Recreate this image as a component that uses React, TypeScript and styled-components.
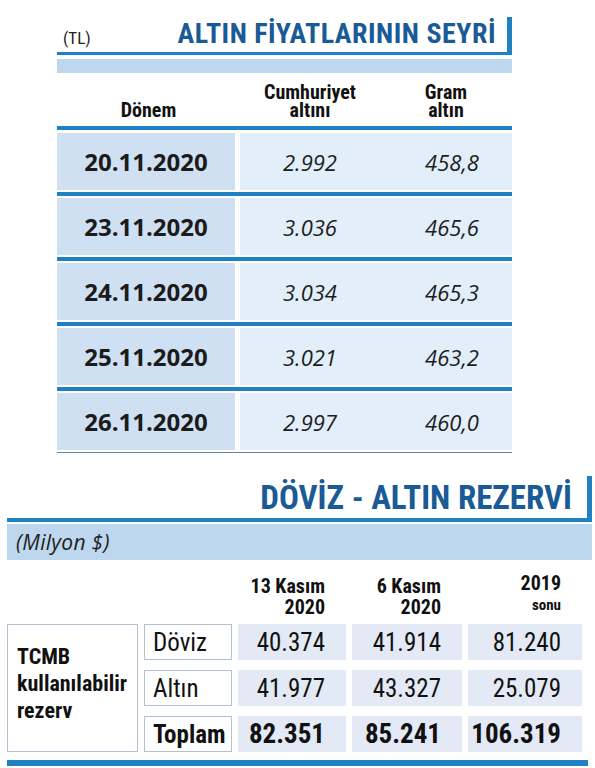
import React from "react";
import styled, { createGlobalStyle } from "styled-components";

const BLUE = "#1f80c2";
const NAVY = "#1a5a96";
const NARROW = `"Roboto Condensed", "DejaVu Sans Condensed", "Liberation Sans Narrow", "Open Sans", sans-serif`;
const SANS = `"Open Sans", "Noto Sans", sans-serif`;

const Global = createGlobalStyle`
  *, *::before, *::after { box-sizing: border-box; }
  html, body { margin: 0; padding: 0; background: #fff; }
  body { font-family: ${SANS}; color: #1c1c1c; }
`;

const Page = styled.div`
  width: 595px;
  height: 768px;
  overflow: hidden;
`;

// ---- başlık çubuğu (ortak)
const TitleBar = styled.header<{ h: number; pr: number; line: number }>`
  height: ${(p) => p.h}px;
  display: flex;
  align-items: flex-end;
  justify-content: space-between;
  padding: 0 ${(p) => p.pr}px 5px 6px;
  border-right: 5px solid ${BLUE};
  border-bottom: ${(p) => p.line}px solid ${BLUE};
`;

const Unit = styled.span`
  font-family: ${NARROW};
  font-size: 17px;
  line-height: 17px;
  color: #222;
`;

const Title = styled.h1<{ size: number; spacing: number }>`
  margin: 0 0 0 auto;
  font-family: ${NARROW};
  font-weight: 700;
  font-size: ${(p) => p.size}px;
  line-height: ${(p) => p.size - 2}px;
  letter-spacing: ${(p) => p.spacing}px;
  color: ${NAVY};
  white-space: nowrap;
`;

const Band = styled.div<{ h: number; gap: number }>`
  height: ${(p) => p.h}px;
  margin-top: ${(p) => p.gap}px;
  background: #bdd7ef;
  display: flex;
  align-items: center;
  padding-left: 9px;
  font-style: italic;
  font-size: 21px;
  letter-spacing: 0.3px;
  color: #222;
`;

// ---- altın fiyatları tablosu
const GoldSection = styled.section`
  width: 455px;
  margin-left: 57px;
  padding-top: 17px;
`;

const GoldHead = styled.div`
  height: 57px;
  display: grid;
  grid-template-columns: 183px 140px 1fr;
  align-items: end;
  padding-bottom: 7px;
  border-bottom: 4px solid ${BLUE};
  margin-bottom: 3px;
`;

const HeadCell = styled.div`
  font-family: ${NARROW};
  font-weight: 700;
  font-size: 20px;
  line-height: 18px;
  text-align: center;
  color: #111;
`;

const GoldRow = styled.div`
  display: grid;
  grid-template-columns: 178px 1fr;
  grid-template-rows: 57px;
  column-gap: 5px;
  padding-bottom: 2px;
  border-bottom: 4px solid ${BLUE};
  margin-bottom: 2px;
  &:last-child {
    border-bottom: 1px solid #5d84a8;
  }
`;

const DateCell = styled.div`
  background: #cfe0f2;
  display: flex;
  align-items: center;
  justify-content: center;
  font-weight: 700;
  font-size: 24px;
  color: #1b1b1b;
`;

const PriceCell = styled.div`
  background: #e2eef9;
  display: grid;
  grid-template-columns: 140px 1fr;
  align-items: center;
`;

const Price = styled.span<{ shift?: number }>`
  text-align: center;
  padding-left: ${(p) => p.shift ?? 0}px;
  font-style: italic;
  font-size: 22px;
  color: #1e1e1e;
`;

// ---- döviz - altın rezervi
const ReserveSection = styled.section`
  width: 585px;
  margin-left: 7px;
  margin-top: 23px;
`;

const ReserveGrid = styled.div`
  display: grid;
  grid-template-columns: 131px 88px 108px 110px 114px;
  column-gap: 6px;
`;

const ColHeads = styled(ReserveGrid)`
  height: 64px;
  align-items: end;
  padding-bottom: 6px;
`;

const ColHead = styled.div<{ lift?: number }>`
  text-align: right;
  padding-right: 21px;
  padding-bottom: ${(p) => p.lift ?? 0}px;
  font-family: ${NARROW};
  font-weight: 700;
  font-size: 20px;
  line-height: 21px;
  color: #111;
`;

const Note = styled.small`
  display: block;
  margin-top: 2px;
  font-size: 15px;
  line-height: 18px;
`;

const Body = styled(ReserveGrid)`
  grid-auto-rows: 36px;
  row-gap: 10px;
`;

const GroupBox = styled.div`
  grid-row: 1 / span 3;
  border: 1px solid #b3bfd3;
  display: flex;
  align-items: center;
  padding: 0 0 10px 9px;
  font-family: ${NARROW};
  font-weight: 700;
  font-size: 22px;
  line-height: 27px;
  color: #111;
`;

const LabelBox = styled.div<{ bold?: boolean }>`
  border: 1px solid #b3bfd3;
  display: flex;
  align-items: center;
  padding-left: 8px;
  font-family: ${NARROW};
  font-weight: ${(p) => (p.bold ? 700 : 400)};
  font-size: 25px;
  color: #111;
`;

const Amount = styled.div<{ bold?: boolean }>`
  background: #e3e9f5;
  display: flex;
  align-items: center;
  justify-content: flex-end;
  padding-right: 21px;
  font-family: ${NARROW};
  font-weight: ${(p) => (p.bold ? 700 : 400)};
  font-size: ${(p) => (p.bold ? 27 : 25)}px;
  color: #111;
`;

const BottomRule = styled.div`
  width: 581px;
  height: 6px;
  margin-top: 8px;
  background: ${BLUE};
`;

const prices = [
  { date: "20.11.2020", cumhuriyet: "2.992", gram: "458,8" },
  { date: "23.11.2020", cumhuriyet: "3.036", gram: "465,6" },
  { date: "24.11.2020", cumhuriyet: "3.034", gram: "465,3" },
  { date: "25.11.2020", cumhuriyet: "3.021", gram: "463,2" },
  { date: "26.11.2020", cumhuriyet: "2.997", gram: "460,0" },
];

const reserves = [
  { label: "Döviz", values: ["40.374", "41.914", "81.240"] },
  { label: "Altın", values: ["41.977", "43.327", "25.079"] },
  { label: "Toplam", values: ["82.351", "85.241", "106.319"], bold: true },
];

export default function App() {
  return (
    <Page>
      <Global />
      <GoldSection>
        <TitleBar h={38} pr={11} line={3}>
          <Unit>(TL)</Unit>
          <Title size={28} spacing={0.5}>
            ALTIN FİYATLARININ SEYRİ
          </Title>
        </TitleBar>
        <Band h={14} gap={4} />
        <GoldHead>
          <HeadCell>Dönem</HeadCell>
          <HeadCell>
            Cumhuriyet
            <br />
            altını
          </HeadCell>
          <HeadCell>
            Gram
            <br />
            altın
          </HeadCell>
        </GoldHead>
        {prices.map((p) => (
          <GoldRow key={p.date}>
            <DateCell>{p.date}</DateCell>
            <PriceCell>
              <Price>{p.cumhuriyet}</Price>
              <Price shift={12}>{p.gram}</Price>
            </PriceCell>
          </GoldRow>
        ))}
      </GoldSection>

      <ReserveSection>
        <TitleBar h={46} pr={15} line={4}>
          <Title size={33} spacing={0}>
            DÖVİZ - ALTIN REZERVİ
          </Title>
        </TitleBar>
        <Band h={36} gap={2}>
          (Milyon $)
        </Band>
        <ColHeads>
          <div />
          <div />
          <ColHead>
            13 Kasım
            <br />
            2020
          </ColHead>
          <ColHead>
            6 Kasım
            <br />
            2020
          </ColHead>
          <ColHead lift={4}>
            2019
            <Note>sonu</Note>
          </ColHead>
        </ColHeads>
        <Body>
          <GroupBox>
            TCMB
            <br />
            kullanılabilir
            <br />
            rezerv
          </GroupBox>
          {reserves.map((r) => (
            <React.Fragment key={r.label}>
              <LabelBox bold={r.bold}>{r.label}</LabelBox>
              {r.values.map((v, i) => (
                <Amount key={i} bold={r.bold}>
                  {v}
                </Amount>
              ))}
            </React.Fragment>
          ))}
        </Body>
        <BottomRule />
      </ReserveSection>
    </Page>
  );
}
